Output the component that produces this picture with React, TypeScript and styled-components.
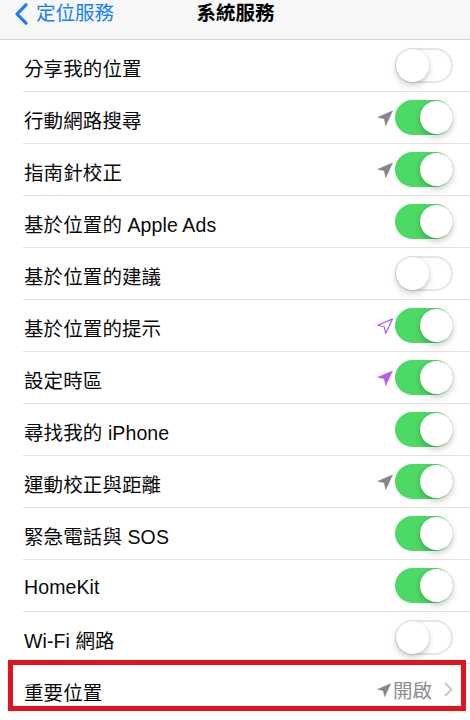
import React, { FC } from 'react';
import styled, { createGlobalStyle } from 'styled-components';

type Arrow = 'gray' | 'purple' | 'purpleOutline' | null;

type ServiceItem = {
  label: string;
  on: boolean;
  arrow: Arrow;
};

const services: ServiceItem[] = [
  { label: '分享我的位置', on: false, arrow: null },
  { label: '行動網路搜尋', on: true, arrow: 'gray' },
  { label: '指南針校正', on: true, arrow: 'gray' },
  { label: '基於位置的 Apple Ads', on: true, arrow: null },
  { label: '基於位置的建議', on: false, arrow: null },
  { label: '基於位置的提示', on: true, arrow: 'purpleOutline' },
  { label: '設定時區', on: true, arrow: 'purple' },
  { label: '尋找我的 iPhone', on: true, arrow: null },
  { label: '運動校正與距離', on: true, arrow: 'gray' },
  { label: '緊急電話與 SOS', on: true, arrow: null },
  { label: 'HomeKit', on: true, arrow: null },
  { label: 'Wi-Fi 網路', on: false, arrow: null },
];

const LocationArrow: FC<{ kind: Exclude<Arrow, null>; size?: number }> = ({ kind, size = 18 }) => {
  const color = kind === 'gray' ? '#85858b' : '#b05ef0';
  const outline = kind === 'purpleOutline';
  return (
    <ArrowIcon width={size} height={size} viewBox="0 0 24 24">
      <polygon
        points="2.5,11 22,2.5 13,22 11,13"
        fill={outline ? 'none' : color}
        stroke={color}
        strokeWidth={outline ? 1.6 : 0.8}
        strokeLinejoin="round"
      />
    </ArrowIcon>
  );
};

const App: FC = () => {
  return (
    <>
      <GlobalStyle />
      <Screen>
        <NavBar>
          <BackButton>
            <svg width="13" height="22" viewBox="0 0 13 22">
              <path d="M11 1.8 L2 11 L11 20.2" fill="none" stroke="#157efb" strokeWidth="3.2" strokeLinecap="round" strokeLinejoin="round" />
            </svg>
            <span>定位服務</span>
          </BackButton>
          <Title>系統服務</Title>
          <span />
        </NavBar>
        <List>
          {services.map((s) => (
            <RowWrap key={s.label}>
              <Row>
                <Label>{s.label}</Label>
                <Accessory>
                  {s.arrow && <LocationArrow kind={s.arrow} />}
                  <Switch $on={s.on}>
                    <Knob $on={s.on} />
                  </Switch>
                </Accessory>
              </Row>
            </RowWrap>
          ))}
          <RowWrap>
            <Row $last>
              <Label>重要位置</Label>
              <Accessory>
                <LocationArrow kind="gray" size={16} />
                <Detail>開啟</Detail>
                <svg width="9" height="15" viewBox="0 0 9 15">
                  <path d="M1.5 1.5 L7.5 7.5 L1.5 13.5" fill="none" stroke="#c7c7cc" strokeWidth="1.8" strokeLinecap="round" strokeLinejoin="round" />
                </svg>
              </Accessory>
            </Row>
            <Highlight />
          </RowWrap>
        </List>
      </Screen>
    </>
  );
};

const GlobalStyle = createGlobalStyle`
  html, body {
    margin: 0;
    padding: 0;
    background: #ffffff;
    overflow: hidden;
  }
  body {
    font-family: "Liberation Sans", "Noto Sans CJK TC", sans-serif;
    -webkit-font-smoothing: antialiased;
  }
`;

const Screen = styled.div`
  width: 470px;
  height: 720px;
  background: #ffffff;
  overflow: hidden;
`;

const NavBar = styled.div`
  height: 40px;
  box-sizing: border-box;
  display: grid;
  grid-template-columns: 1fr auto 1fr;
  align-items: start;
  padding: 2px 0 0 15px;
  background: #f7f7f8;
  border-bottom: 1px solid #d4d4d8;
`;

const BackButton = styled.div`
  display: flex;
  align-items: center;
  gap: 8px;
  color: #157efb;
  font-size: 19.5px;
  line-height: 24px;
  span {
    margin-top: -1px;
  }
`;

const Title = styled.div`
  color: #000;
  font-size: 19.5px;
  font-weight: 600;
  line-height: 24px;
  margin-top: -1px;
  margin-left: -14px;
`;

const List = styled.div`
  display: flex;
  flex-direction: column;
`;

const RowWrap = styled.div`
  position: relative;
`;

const Row = styled.div<{ $last?: boolean }>`
  height: 52px;
  box-sizing: border-box;
  margin-left: 23px;
  padding: 3px 17px 0 1px;
  display: flex;
  align-items: center;
  justify-content: space-between;
  border-bottom: 1px solid ${(p) => (p.$last ? 'transparent' : '#e2e2e5')};
`;

const Label = styled.div`
  font-size: 19.5px;
  color: #0a0a0a;
  letter-spacing: 0.1px;
`;

const Accessory = styled.div`
  display: flex;
  align-items: center;
  gap: 0;
  margin-top: -3px;
`;

const ArrowIcon = styled.svg`
  display: block;
  margin-right: 1px;
`;

const Detail = styled.span`
  font-size: 19.5px;
  color: #8e8e93;
  margin-right: 12px;
`;

const Switch = styled.div<{ $on: boolean }>`
  position: relative;
  width: 58px;
  height: 35px;
  box-sizing: border-box;
  border-radius: 18px;
  background: ${(p) => (p.$on ? '#4cd964' : '#ffffff')};
  border: 2px solid ${(p) => (p.$on ? '#4cd964' : '#e6e6ea')};
`;

const Knob = styled.div<{ $on: boolean }>`
  position: absolute;
  top: -1px;
  left: ${(p) => (p.$on ? '23px' : '-1px')};
  width: 33px;
  height: 33px;
  border-radius: 50%;
  background: #ffffff;
  box-shadow: 0 3px 6px rgba(0, 0, 0, 0.22), 0 0 0 0.5px rgba(0, 0, 0, 0.06);
`;

const Highlight = styled.div`
  position: absolute;
  top: -4px;
  left: 8px;
  width: 458px;
  height: 51px;
  box-sizing: border-box;
  border: 5px solid #e0141c;
  pointer-events: none;
`;

export default App;
